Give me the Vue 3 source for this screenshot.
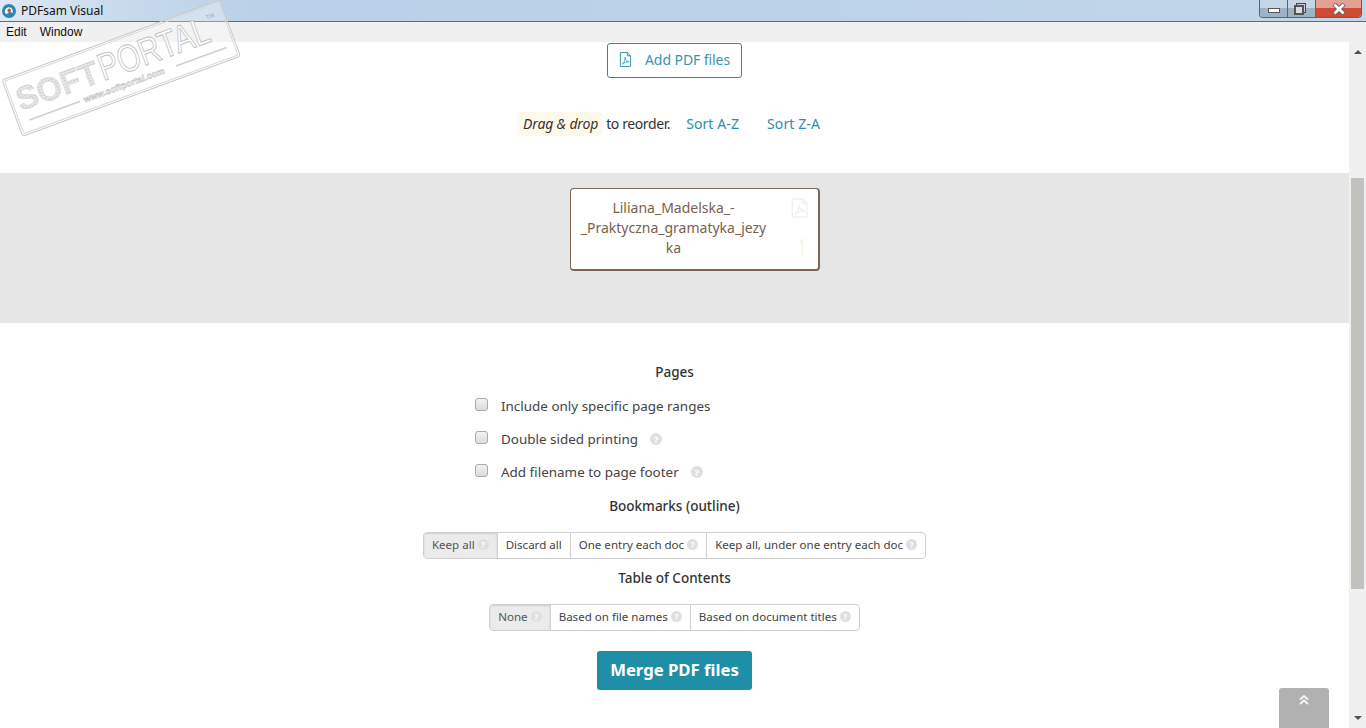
<script setup>
const pageOptions = [
  { label: 'Include only specific page ranges', help: false },
  { label: 'Double sided printing', help: true },
  { label: 'Add filename to page footer', help: true },
]
const bookmarks = ['Keep all', 'Discard all', 'One entry each doc', 'Keep all, under one entry each doc']
const toc = ['None', 'Based on file names', 'Based on document titles']
const helpItems = new Set(['Keep all', 'One entry each doc', 'Keep all, under one entry each doc', 'None', 'Based on file names', 'Based on document titles'])
</script>

<template>
  <div class="window">
    <header class="titlebar">
      <svg class="appicon" width="16" height="16" viewBox="0 0 16 16">
        <circle cx="8" cy="8" r="7" fill="#2b88ae" />
        <path d="M4.5 10.5 A4 4 0 1 1 11.5 10 L8.6 8.6 L6 11 Z" fill="#fff" />
        <circle cx="8.2" cy="7.4" r="1.8" fill="#c9503c" />
      </svg>
      <span class="apptitle">PDFsam Visual</span>
      <div class="controls">
        <div class="ctl ctl-min"><i class="min-glyph"></i></div>
        <div class="ctl ctl-max"><i class="max-back"></i><i class="max-front"></i></div>
        <div class="ctl ctl-close">
          <svg width="14" height="12" viewBox="0 0 14 12"><path d="M2 1 L12 11 M12 1 L2 11" stroke="#555" stroke-width="4.4" /><path d="M2.4 1.4 L11.6 10.6 M11.6 1.4 L2.4 10.6" stroke="#fff" stroke-width="2.8" /></svg>
        </div>
      </div>
    </header>
    <nav class="menubar"><span>Edit</span><span>Window</span></nav>

    <div class="viewport">
      <main class="content">
        <div class="addrow">
          <button class="addbtn">
            <svg width="13" height="15" viewBox="0 0 14 16" fill="none" stroke="#2b8fac" stroke-width="1">
              <path d="M1.5 .5 H9 L12.5 4 V15.5 H1.5 Z M9 .5 V4 H12.5" />
              <path d="M3.5 13 C5.5 11.5 7 8 6.5 5.5 C6.8 8.5 8.5 10.3 11 10.6 C8.5 10.5 5.5 11 3.5 13 Z" stroke-width=".8" />
            </svg>
            <span>Add PDF files</span>
          </button>
        </div>
        <div class="sortrow">
          <em class="hint">Drag &amp; drop</em>
          <span class="reorder">to reorder.</span>
          <a class="sort first">Sort A-Z</a>
          <a class="sort">Sort Z-A</a>
        </div>
        <section class="band">
          <article class="card">
            <p class="filename">Liliana_Madelska_-<br />_Praktyczna_gramatyka_jezy<br />ka</p>
            <svg class="cardicon" width="17" height="20" viewBox="0 0 16 19" fill="none" stroke="#f0efea" stroke-width="1.2">
              <path d="M1 1 H11 L15 5 V18 H1 Z M11 1 V5 H15" />
              <path d="M3.5 15.5 C6 13.5 8 9.5 7.5 6.5 C8 10 10 12 13 12.3 C10 12.3 6 13 3.5 15.5 Z" />
            </svg>
            <span class="cardnum">1</span>
          </article>
        </section>

        <h3 class="heading pages">Pages</h3>
        <ul class="checks">
          <li v-for="o in pageOptions" :key="o.label">
            <span class="box"></span>
            <span class="checklabel">{{ o.label }}</span>
            <span v-if="o.help" class="help big">?</span>
          </li>
        </ul>

        <h3 class="heading bookmarks">Bookmarks (outline)</h3>
        <div class="group">
          <div v-for="(b, i) in bookmarks" :key="b" class="seg" :class="{ active: i === 0 }">
            {{ b }}<span v-if="helpItems.has(b)" class="help">?</span>
          </div>
        </div>

        <h3 class="heading tochead">Table of Contents</h3>
        <div class="group togroup">
          <div v-for="(t, i) in toc" :key="t" class="seg" :class="{ active: i === 0 }">
            {{ t }}<span class="help">?</span>
          </div>
        </div>

        <div class="mergerow"><button class="merge">Merge PDF files</button></div>
      </main>

      <aside class="scrollbar">
        <span class="arrow up"></span>
        <div class="thumb"></div>
        <span class="arrow down"></span>
      </aside>

      <button class="totop" aria-label="Back to top">
        <svg width="12" height="11" viewBox="0 0 12 11" fill="none" stroke="#f4f4f4" stroke-width="2"><path d="M2 5.5 L6 2 L10 5.5 M2 10 L6 6.5 L10 10" /></svg>
      </button>
    </div>

    <svg class="watermark" width="250" height="150" viewBox="0 0 250 150">
      <defs>
        <pattern id="dots" width="3" height="3" patternUnits="userSpaceOnUse">
          <rect width="3" height="3" fill="#fff" />
          <rect x=".4" y=".4" width="2.2" height="2.2" fill="#c6c6c6" />
        </pattern>
      </defs>
      <g transform="translate(2 80) rotate(-20.2)">
        <rect x="0" y="0" width="232" height="60" rx="3" fill="rgba(255,255,255,.3)" stroke="#c8c8c8" stroke-width="1" />
        <rect x="2" y="2" width="228" height="56" rx="2" fill="none" stroke="#d8d8d8" stroke-width="1" />
        <text x="7" y="36" class="wm-soft" fill="url(#dots)" stroke="#c6c6c6" stroke-width=".3" textLength="86" lengthAdjust="spacingAndGlyphs">SOFT</text>
        <text x="95" y="36" class="wm-portal" fill="#fff" stroke="#bdbdbd" stroke-width=".9" textLength="116" lengthAdjust="spacingAndGlyphs">PORTAL</text>
        <text x="213" y="14" class="wm-tm" fill="#b8b8b8">TM</text>
        <line x1="12" y1="47" x2="66" y2="47" stroke="#cfcfcf" stroke-width="1.6" />
        <text x="70" y="50" class="wm-url" fill="#fff" stroke="#b8b8b8" stroke-width=".5">www.softportal.com</text>
        <line x1="168" y1="47" x2="222" y2="47" stroke="#cfcfcf" stroke-width="1.6" />
      </g>
    </svg>
  </div>
</template>

<style>
html, body { margin: 0; padding: 0; overflow: hidden; }
</style>

<style scoped>
.window {
  width: 1366px;
  height: 728px;
  position: relative;
  overflow: hidden;
  display: flex;
  flex-direction: column;
  font-family: "Noto Sans", "Open Sans", sans-serif;
  color: #3a3a3a;
  background: #fff;
}
.titlebar {
  height: 21px;
  flex: none;
  display: flex;
  align-items: center;
  position: relative;
  background: linear-gradient(90deg, #dfe9f3 0%, #c9dbec 8%, #b9d0e8 20%, #bdd3e9 60%, #c2d6ea 100%);
  border-bottom: 1px solid #5d6b7a;
}
.appicon { margin-left: 1px; }
.apptitle {
  margin-left: 4px;
  font: 12px "Noto Sans", sans-serif;
  color: #111;
}
.controls {
  position: absolute;
  top: 0;
  right: 4px;
  height: 17px;
  display: flex;
  border: 1px solid #59636e;
  border-top: none;
  border-radius: 0 0 4px 4px;
  overflow: hidden;
}
.ctl {
  display: flex;
  align-items: center;
  justify-content: center;
  position: relative;
  background: linear-gradient(#c5d5e6 0 50%, #9fb1c4 50% 100%);
}
.ctl-min { width: 27px; border-right: 1px solid #59636e; }
.ctl-max { width: 27px; border-right: 1px solid #59636e; }
.ctl-close { width: 45px; background: linear-gradient(#e3a194 0 45%, #cf4a32 45% 100%); }
.min-glyph { width: 10px; height: 3px; background: #fff; border: 1px solid #555; margin-top: 3px; }
.max-back { position: absolute; left: 8px; top: 3px; width: 8px; height: 8px; border: 1px solid #444; background: #ccd; }
.max-front { position: absolute; left: 6px; top: 5px; box-sizing: border-box; width: 10px; height: 10px; border: 2px solid #555; background: #d5dde5; }
.menubar {
  height: 20px;
  flex: none;
  background: #f0f0f0;
  display: flex;
  align-items: center;
  gap: 13px;
  padding-left: 6px;
  font: 12px "Liberation Sans", Arial, sans-serif;
  color: #111;
}
.viewport {
  flex: 1;
  min-height: 0;
  display: flex;
  position: relative;
}
.content {
  flex: 1;
  min-width: 0;
  display: flex;
  flex-direction: column;
  align-items: stretch;
}
.addrow { display: flex; justify-content: center; padding-top: 1px; }
.addbtn {
  width: 135px;
  height: 35px;
  box-sizing: border-box;
  border: 1px solid #1f8fa8;
  border-radius: 3px;
  background: #fff;
  display: flex;
  align-items: center;
  padding: 0 0 3px 11px;
  gap: 13px;
  font: 14px "Noto Sans", sans-serif;
  letter-spacing: -.08px;
  color: #3c93ad;
}
.sortrow {
  margin-top: 34px;
  height: 24px;
  display: flex;
  align-items: center;
  justify-content: center;
  font-size: 14px;
  padding-right: 12px;
  line-height: 18px;
}
.hint {
  background: #fff9ec;
  border-radius: 4px;
  padding: 3px 4px 3px 6px;
  margin-right: 4px;
  color: #333;
  letter-spacing: -.15px;
}
.reorder { color: #333; letter-spacing: -.4px; }
.sort { color: #2b8fac; margin-left: 28px; letter-spacing: .1px; }
.sort.first { margin-left: 16px; }
.band {
  margin-top: 37px;
  height: 150px;
  background: #e6e6e6;
  display: flex;
  justify-content: center;
  padding: 15px 0 0 40px;
  box-sizing: border-box;
}
.card {
  width: 250px;
  height: 83px;
  box-sizing: border-box;
  background: #fff;
  border: 1px solid #7f6654;
  border-bottom-width: 2px;
  border-right-width: 2px;
  border-radius: 4px;
  position: relative;
  padding: 9px 48px 0 9px;
}
.filename {
  margin: 0;
  width: 188px;
  text-align: center;
  font-size: 14px;
  line-height: 20px;
  color: #7a5f4e;
  white-space: nowrap;
}
.cardicon { position: absolute; right: 10px; top: 9px; }
.cardnum { position: absolute; right: 12px; top: 46px; font-size: 22px; line-height: 22px; color: #f5f0dc; transform: scaleX(.55); transform-origin: right center; }
.heading {
  margin: 0;
  text-align: center;
  font-size: 13.5px;
  font-weight: 500;
  line-height: 20px;
  color: #333;
}
.pages { margin-top: 39px; }
.checks {
  list-style: none;
  margin: 14px 0 0;
  padding: 0 0 0 475px;
  display: flex;
  flex-direction: column;
  gap: 13px;
}
.checks li {
  height: 20px;
  display: flex;
  align-items: center;
  font-size: 13.45px;
  color: #444;
}
.box {
  width: 13px;
  height: 13px;
  box-sizing: border-box;
  border: 1px solid #aaa;
  border-radius: 3px;
  background: linear-gradient(#f2f2f2, #dcdcdc);
  margin-right: 13px;
  margin-top: -4px;
}
.help {
  display: inline-flex;
  align-items: center;
  justify-content: center;
  width: 11px;
  height: 11px;
  border-radius: 50%;
  background: #dfdfdf;
  color: #fff;
  font-size: 8px;
  font-weight: 700;
  line-height: 1;
  margin-left: 3px;
}
.help.big { width: 12px; height: 12px; margin-left: 12px; font-size: 9px; }
.bookmarks { margin-top: 14px; }
.group {
  margin: 16px auto 0;
  display: flex;
  height: 27px;
  box-sizing: border-box;
  border: 1px solid #cfcfcf;
  border-radius: 4px;
  width: max-content;
  font-size: 11.55px;
  color: #444;
  overflow: hidden;
}
.seg {
  display: flex;
  align-items: center;
  padding: 0 8px 2px;
  white-space: nowrap;
  border-left: 1px solid #cfcfcf;
}
.seg:first-child { border-left: none; }
.seg.active {
  background: #ebebeb;
  box-shadow: inset 0 1px 2px rgba(0,0,0,.12);
  color: #555;
}
.tochead { margin-top: 9px; }
.togroup { margin-top: 16px; }
.mergerow { display: flex; justify-content: center; margin-top: 20px; }
.merge {
  width: 155px;
  height: 39px;
  border: none;
  border-radius: 3px;
  background: #1f8fa8;
  color: #fff;
  font: 700 16.7px "Noto Sans", sans-serif;
  padding: 0 0 3px;
}
.scrollbar {
  width: 17px;
  flex: none;
  background: #f0f0f0;
  position: relative;
}
.thumb {
  position: absolute;
  left: 2px;
  top: 136px;
  width: 13px;
  height: 411px;
  background: #c1c1be;
}
.arrow {
  position: absolute;
  left: 5px;
  width: 0;
  height: 0;
  border-left: 4px solid transparent;
  border-right: 4px solid transparent;
}
.arrow.up { top: 8px; border-bottom: 4px solid #50505a; }
.arrow.down { bottom: 8px; border-top: 4px solid #50505a; }
.totop {
  position: absolute;
  left: 1279px;
  top: 646px;
  width: 50px;
  height: 50px;
  border: none;
  border-radius: 3px 3px 0 0;
  background: #b1b1b1;
  padding: 6px 0 0;
  display: flex;
  justify-content: center;
  align-items: flex-start;
}
.watermark { position: absolute; left: 0; top: 0; pointer-events: none; overflow: visible; }
.wm-soft { font: 700 33px "Liberation Sans", sans-serif; }
.wm-portal { font: 400 38px "Liberation Sans", sans-serif; }
.wm-tm { font: 700 6px "Liberation Sans", sans-serif; }
.wm-url { font: 700 9px "Liberation Sans", sans-serif; }
</style>
